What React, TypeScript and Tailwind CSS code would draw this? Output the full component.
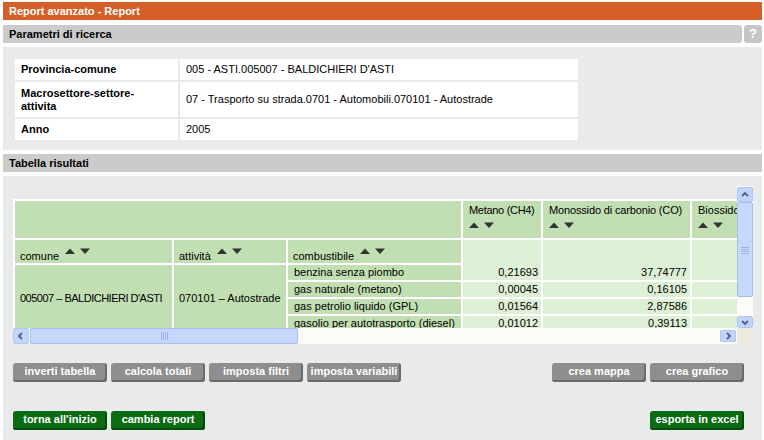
import React from "react";

const DARK = "bg-[#c2dfb3]";
const LIGHT = "bg-[#ddefd4]";

function Arrows({ className = "" }: { className?: string }) {
  return (
    <svg width="26" height="7" viewBox="0 0 26 7" className={className}>
      <polygon points="0,6 5,0.5 10,6" fill="#333" />
      <polygon points="15,0.5 25,0.5 20,6" fill="#333" />
    </svg>
  );
}

function Chevron({ dir }: { dir: "up" | "down" | "left" | "right" }) {
  const d =
    dir === "up"
      ? "M2 6 L5 3 L8 6"
      : dir === "down"
      ? "M2 4 L5 7 L8 4"
      : dir === "left"
      ? "M6 2 L3 5 L6 8"
      : "M4 2 L7 5 L4 8";
  return (
    <svg width="10" height="10" viewBox="0 0 10 10">
      <path d={d} fill="none" stroke="#4d6185" strokeWidth="1.8" />
    </svg>
  );
}

function GrayBtn({ children }: { children: React.ReactNode }) {
  return (
    <div className="h-[19px] w-[94px] rounded-[3px] bg-[#8e8e8e] text-white font-bold text-[11px] leading-[17px] text-center whitespace-nowrap shadow-[inset_-2px_-2px_0_#6b6b6b]">
      {children}
    </div>
  );
}

function GreenBtn({ children }: { children: React.ReactNode }) {
  return (
    <div className="h-[19px] w-[94px] rounded-[3px] bg-[#0c6c14] text-white font-bold text-[11px] leading-[17px] text-center whitespace-nowrap shadow-[inset_-2px_-2px_0_#064a0b]">
      {children}
    </div>
  );
}

export default function App() {
  return (
    <div className="w-[764px] h-[440px] overflow-hidden bg-white pl-[3px] pt-[2px] pr-[2px] font-['Liberation_Sans',Arial,sans-serif] text-[11px] text-black flex flex-col">
      <div className="h-[18px] shrink-0 bg-[#d55f27] px-[6px] leading-[18px] font-bold text-white">
        Report avanzato - Report
      </div>

      <div className="mt-[5px] flex h-[18px] shrink-0 gap-[2px]">
        <div className="flex-1 rounded-r-[3px] bg-[#cbcbcb] px-[6px] leading-[18px] font-bold">
          Parametri di ricerca
        </div>
        <div className="w-[18px] rounded-[3px] bg-[#c6c6c6] text-center text-[13px] leading-[18px] font-bold text-white">
          ?
        </div>
      </div>

      <div className="mt-[4px] h-[103px] shrink-0 bg-[#e9eaea] p-[12px]">
        <div className="grid grid-cols-[163px_398px] grid-rows-[21px_35px_21px] gap-[2px]">
          <div className="flex items-center bg-white px-[6px] font-bold">Provincia-comune</div>
          <div className="flex items-center bg-white px-[6px]">005 - ASTI.005007 - BALDICHIERI D'ASTI</div>
          <div className="flex items-center bg-white px-[6px] font-bold leading-[13px]">
            <span>
              Macrosettore-settore-
              <br />
              attivita
            </span>
          </div>
          <div className="flex items-center bg-white px-[6px]">07 - Trasporto su strada.0701 - Automobili.070101 - Autostrade</div>
          <div className="flex items-center bg-white px-[6px] font-bold">Anno</div>
          <div className="flex items-center bg-white px-[6px]">2005</div>
        </div>
      </div>

      <div className="mt-[4px] h-[18px] shrink-0 bg-[#cbcbcb] px-[6px] leading-[18px] font-bold">
        Tabella risultati
      </div>

      <div className="mt-[4px] flex-1 bg-[#e9eaea] pl-[10px] pt-[10px] pr-[18px]">
        {/* scroll area */}
        <div className="grid w-[740px] grid-cols-[724px_16px] grid-rows-[142px_16px]">
          <div className="overflow-hidden pt-[13px]">
            <div className="inline-grid bg-white p-[2px] gap-[2px] grid-cols-[157px_112px_173px_78px_147px_60px] grid-rows-[37px_23px_15px_15px_15px_15px] leading-[15px]">
              {/* row 1 */}
              <div className={`${DARK} col-span-3`} />
              <div className={`${DARK} px-[6px] pt-[3px] leading-[13px] whitespace-nowrap tracking-[-0.3px]`}>
                <div>Metano (CH4)</div>
                <Arrows className="mt-[5px]" />
              </div>
              <div className={`${DARK} px-[6px] pt-[3px] leading-[13px] whitespace-nowrap tracking-[-0.15px]`}>
                <div>Monossido di carbonio (CO)</div>
                <Arrows className="mt-[5px]" />
              </div>
              <div className={`${DARK} pl-[6px] pt-[3px] leading-[13px] whitespace-nowrap`}>
                <div>Biossido</div>
                <Arrows className="mt-[5px]" />
              </div>

              {/* row 2 */}
              <div className={`${DARK} flex items-end px-[5px]`}>
                <span className="leading-[13px]">comune</span>
                <Arrows className="mb-[8px] ml-[6px]" />
              </div>
              <div className={`${DARK} flex items-end px-[5px]`}>
                <span className="leading-[13px]">attività</span>
                <Arrows className="mb-[8px] ml-[6px]" />
              </div>
              <div className={`${DARK} flex items-end px-[5px]`}>
                <span className="leading-[13px]">combustibile</span>
                <Arrows className="mb-[8px] ml-[6px]" />
              </div>
              <div className={`${LIGHT} row-span-2 flex items-end justify-end pr-[3px]`}>0,21693</div>
              <div className={`${LIGHT} row-span-2 flex items-end justify-end pr-[3px]`}>37,74777</div>
              <div className={`${LIGHT} row-span-2`} />

              {/* row 3 */}
              <div className={`${DARK} row-span-4 flex items-center px-[5px] whitespace-nowrap tracking-[-0.5px]`}>
                005007 – BALDICHIERI D'ASTI
              </div>
              <div className={`${DARK} row-span-4 flex items-center px-[5px] whitespace-nowrap`}>
                070101 – Autostrade
              </div>
              <div className={`${DARK} px-[6px] whitespace-nowrap`}>benzina senza piombo</div>

              {/* row 4 */}
              <div className={`${DARK} px-[6px] whitespace-nowrap`}>gas naturale (metano)</div>
              <div className={`${LIGHT} text-right pr-[3px]`}>0,00045</div>
              <div className={`${LIGHT} text-right pr-[3px]`}>0,16105</div>
              <div className={LIGHT} />

              {/* row 5 */}
              <div className={`${DARK} px-[6px] whitespace-nowrap`}>gas petrolio liquido (GPL)</div>
              <div className={`${LIGHT} text-right pr-[3px]`}>0,01564</div>
              <div className={`${LIGHT} text-right pr-[3px]`}>2,87586</div>
              <div className={LIGHT} />

              {/* row 6 */}
              <div className={`${DARK} px-[6px] whitespace-nowrap`}>gasolio per autotrasporto (diesel)</div>
              <div className={`${LIGHT} text-right pr-[3px]`}>0,01012</div>
              <div className={`${LIGHT} text-right pr-[3px]`}>0,39113</div>
              <div className={LIGHT} />
            </div>
          </div>

          {/* vertical scrollbar */}
          <div className="flex flex-col bg-[#fbfbf8] pt-[1px]">
            <div className="flex h-[15px] items-center justify-center rounded-[2px] border border-[#b3c6f2] bg-[#c3d3fb]">
              <Chevron dir="up" />
            </div>
            <div className="flex h-[95px] items-center justify-center rounded-[2px] border border-[#a7bcef] bg-[#c8d7fc]">
              <svg width="8" height="8" viewBox="0 0 8 8">
                <path d="M0 1.5H8M0 3.5H8M0 5.5H8M0 7.5H8" stroke="#9fb2e3" strokeWidth="1" />
              </svg>
            </div>
            <div className="flex-1" />
            <div className="flex h-[12px] items-center justify-center rounded-[2px] border border-[#b3c6f2] bg-[#c3d3fb]">
              <Chevron dir="down" />
            </div>
          </div>

          {/* horizontal scrollbar */}
          <div className="flex bg-[#fbfbf8] pr-[1px]">
            <div className="flex w-[16px] items-center justify-center rounded-[2px] border border-[#b3c6f2] bg-[#c3d3fb]">
              <Chevron dir="left" />
            </div>
            <div className="ml-[1px] flex w-[268px] items-center justify-center rounded-[2px] border border-[#a7bcef] bg-[#c8d7fc]">
              <svg width="8" height="8" viewBox="0 0 8 8">
                <path d="M1.5 0V8M3.5 0V8M5.5 0V8M7.5 0V8" stroke="#9fb2e3" strokeWidth="1" />
              </svg>
            </div>
            <div className="flex-1" />
            <div className="my-[2px] flex w-[16px] items-center justify-center rounded-[2px] border border-[#b3c6f2] bg-[#c3d3fb]">
              <Chevron dir="right" />
            </div>
          </div>
          <div className="bg-[#eeeadb]" />
        </div>

        {/* gray buttons */}
        <div className="mt-[19px] flex justify-between">
          <div className="flex gap-[4px]">
            <GrayBtn>inverti tabella</GrayBtn>
            <GrayBtn>calcola totali</GrayBtn>
            <GrayBtn>imposta filtri</GrayBtn>
            <GrayBtn>imposta variabili</GrayBtn>
          </div>
          <div className="flex gap-[4px]">
            <GrayBtn>crea mappa</GrayBtn>
            <GrayBtn>crea grafico</GrayBtn>
          </div>
        </div>

        {/* green buttons */}
        <div className="mt-[29px] flex justify-between">
          <div className="flex gap-[4px]">
            <GreenBtn>torna all'inizio</GreenBtn>
            <GreenBtn>cambia report</GreenBtn>
          </div>
          <GreenBtn>esporta in excel</GreenBtn>
        </div>
      </div>
    </div>
  );
}
